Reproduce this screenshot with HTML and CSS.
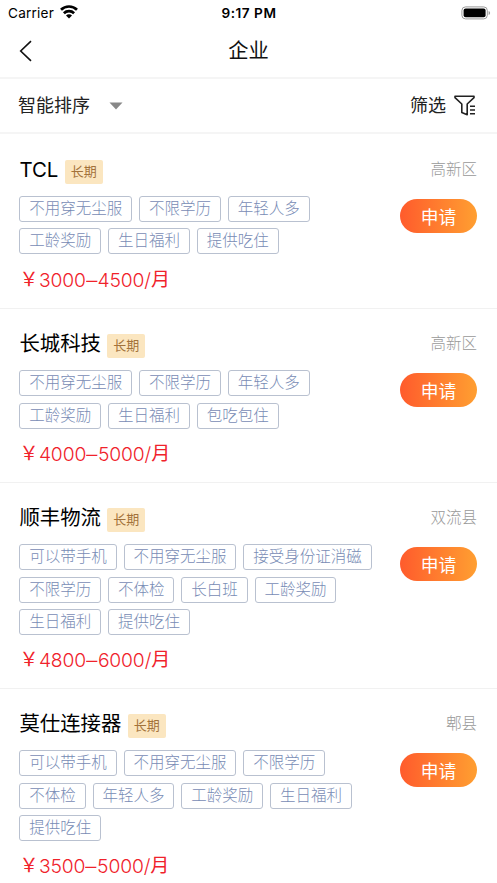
FILE: index.html
```html
<!DOCTYPE html>
<html lang="zh-CN">
<head>
<meta charset="utf-8">
<title>企业</title>
<link rel="stylesheet" href="styles.css">
</head>
<body>
<header class="status">
  <div class="carrier"><span class="carrier-name">Carrier</span>
    <svg class="wifi" width="18" height="14" viewBox="0 0 18 14"><g fill="none" stroke="#000" stroke-width="2.7"><path d="M1 4.8a11.4 11.4 0 0 1 16 0"/><path d="M3.9 8.2a7.3 7.3 0 0 1 10.2 0"/></g><path d="M9 13.5 6 10.6a4.2 4.2 0 0 1 6 0Z"/></svg>
  </div>
  <div class="time">9:17 PM</div>
  <svg class="battery" width="30" height="14" viewBox="0 0 30 14"><rect x=".9" y=".9" width="25.4" height="12" rx="3.6" fill="none" stroke="#999" stroke-width="1"/><rect x="2.6" y="2.6" width="22" height="8.6" rx="2"/><path d="M27.6 5v4q1.5-.7 1.5-2t-1.5-2" fill="#999"/></svg>
</header>
<nav class="navbar">
  <svg class="back" width="14" height="22" viewBox="0 0 14 22"><path d="M12 1.2 1.7 11 12 20.8" fill="none" stroke="#111" stroke-width="1.6"/></svg>
  <h1>企业</h1>
</nav>
<div class="filters">
  <div class="sort">智能排序<svg width="14" height="8" viewBox="0 0 14 8"><path d="M.5.5h13L7 7.5Z" fill="#888"/></svg></div>
  <div class="filter">筛选<svg width="22" height="21" viewBox="0 0 22 21"><path d="M1 1.2h19v1.5L13.2 9v10.8L7.8 17.4V9L1 2.7Z" fill="none" stroke="#222" stroke-width="1.6" stroke-linejoin="round"/><path d="M16 11.2h5M16 15h5M16 18.7h5" stroke="#222" stroke-width="1.5"/></svg></div>
</div>
<main>
  <article class="card">
    <div class="head"><h2>TCL</h2><span class="term">长期</span><span class="area">高新区</span></div>
    <div class="tags"><span>不用穿无尘服</span><span>不限学历</span><span>年轻人多</span><span>工龄奖励</span><span>生日福利</span><span>提供吃住</span></div>
    <div class="price"><span class="yen">￥</span><span class="num">3000<span class="dash">–</span>4500/</span>月</div>
    <button class="apply">申请</button>
  </article>
  <article class="card">
    <div class="head"><h2>长城科技</h2><span class="term">长期</span><span class="area">高新区</span></div>
    <div class="tags"><span>不用穿无尘服</span><span>不限学历</span><span>年轻人多</span><span>工龄奖励</span><span>生日福利</span><span>包吃包住</span></div>
    <div class="price"><span class="yen">￥</span><span class="num">4000<span class="dash">–</span>5000/</span>月</div>
    <button class="apply">申请</button>
  </article>
  <article class="card tall">
    <div class="head"><h2>顺丰物流</h2><span class="term">长期</span><span class="area">双流县</span></div>
    <div class="tags"><span>可以带手机</span><span>不用穿无尘服</span><span>接受身份证消磁</span><span>不限学历</span><span>不体检</span><span>长白班</span><span>工龄奖励</span><span>生日福利</span><span>提供吃住</span></div>
    <div class="price"><span class="yen">￥</span><span class="num">4800<span class="dash">–</span>6000/</span>月</div>
    <button class="apply">申请</button>
  </article>
  <article class="card tall">
    <div class="head"><h2>莫仕连接器</h2><span class="term">长期</span><span class="area">郫县</span></div>
    <div class="tags"><span>可以带手机</span><span>不用穿无尘服</span><span>不限学历</span><span>不体检</span><span>年轻人多</span><span>工龄奖励</span><span>生日福利</span><span>提供吃住</span></div>
    <div class="price"><span class="yen">￥</span><span class="num">3500<span class="dash">–</span>5000/</span>月</div>
    <button class="apply">申请</button>
  </article>
</main>
</body>
</html>
```
FILE: styles.css
```css
* { box-sizing: border-box; }
body {
  margin: 0;
  height: 883px;
  overflow: hidden;
  background: #fff;
  color: #111;
  font-family: Inter, "Noto Sans CJK SC", sans-serif;
}
h1, h2 { margin: 0; font-weight: 400; }
svg { display: block; flex: none; }
.status {
  display: grid;
  grid-template-columns: 1fr auto 1fr;
  align-items: center;
  height: 25px;
  padding: 0 7px 0 8px;
  font-size: 13.6px;
  color: #000;
}
.carrier { display: flex; align-items: center; gap: 6px; letter-spacing: 0.2px; }
.wifi { margin-top: -2px; }
.time { font-weight: 600; letter-spacing: 0.5px; }
.battery { justify-self: end; margin-right: -1px; }
.navbar {
  display: grid;
  grid-template-columns: 40px 1fr 40px;
  align-items: center;
  height: 54px;
  padding: 0 19px;
  border-bottom: 2px solid #f5f5f5;
}
.navbar h1 { text-align: center; font-size: 20.3px; line-height: 30px; }
.filters {
  display: flex;
  justify-content: space-between;
  align-items: center;
  height: 55px;
  padding: 0 21px 0 18px;
  border-bottom: 2px solid #f5f5f5;
  font-size: 18px;
  color: #222;
}
.sort, .filter { display: flex; align-items: center; line-height: 26px; }
.sort { gap: 19px; }
.filter { gap: 8px; }
main { padding-top: 1px; }
.card {
  display: grid;
  grid-template-columns: 373px 1fr;
  grid-template-rows: 33px auto 1fr;
  padding: 18px 20px 0 19.4px;
  border-bottom: 1px solid #f1f1f1;
  height: 174.2px;
}
.card.tall { height: 206px; }
.head { grid-column: 1 / 3; display: flex; align-items: center; }
.head h2 { font-size: 20.4px; line-height: 30px; color: #000; }
.term {
  margin: 4px 0 0 6.4px;
  padding: 0 6px;
  height: 24px;
  line-height: 23px;
  border-radius: 2px;
  background: #fbe6c0;
  color: #a3723a;
  font-size: 13px;
}
.area { margin-left: auto; font-size: 15.5px; font-weight: 300; line-height: 24px; color: #999; }
.tags { display: flex; flex-wrap: wrap; align-content: flex-start; gap: 6.4px 7.2px; margin-top: 10px; }
.tags span {
  height: 26px;
  padding: 0 8.8px;
  border: 1px solid #b9c1d0;
  border-radius: 3px;
  font-size: 15.5px;
  font-weight: 300;
  line-height: 23px;
  color: #788cb5;
  white-space: nowrap;
}
.apply {
  grid-column: 2;
  grid-row: 2;
  justify-self: end;
  align-self: start;
  width: 77px;
  height: 34px;
  margin: 13px 0 0;
  padding: 0;
  border: 0;
  border-radius: 17px;
  background: linear-gradient(90deg, #ff5b2c, #ff9f31);
  color: #fff;
  font: 17.8px/32px "Noto Sans CJK SC", sans-serif;
}
.price {
  grid-column: 1;
  grid-row: 3;
  align-self: end;
  display: flex;
  align-items: center;
  height: 30px;
  margin-bottom: 13px;
  font-size: 19px;
  line-height: 30px;
  color: #f0222b;
}
.yen { width: 19.5px; font-size: 19px; }
.num { font-size: 19.3px; font-weight: 300; letter-spacing: -0.15px; }
.dash { display: inline-block; transform: scaleX(1.15); margin: 0 1.2px; }
```
